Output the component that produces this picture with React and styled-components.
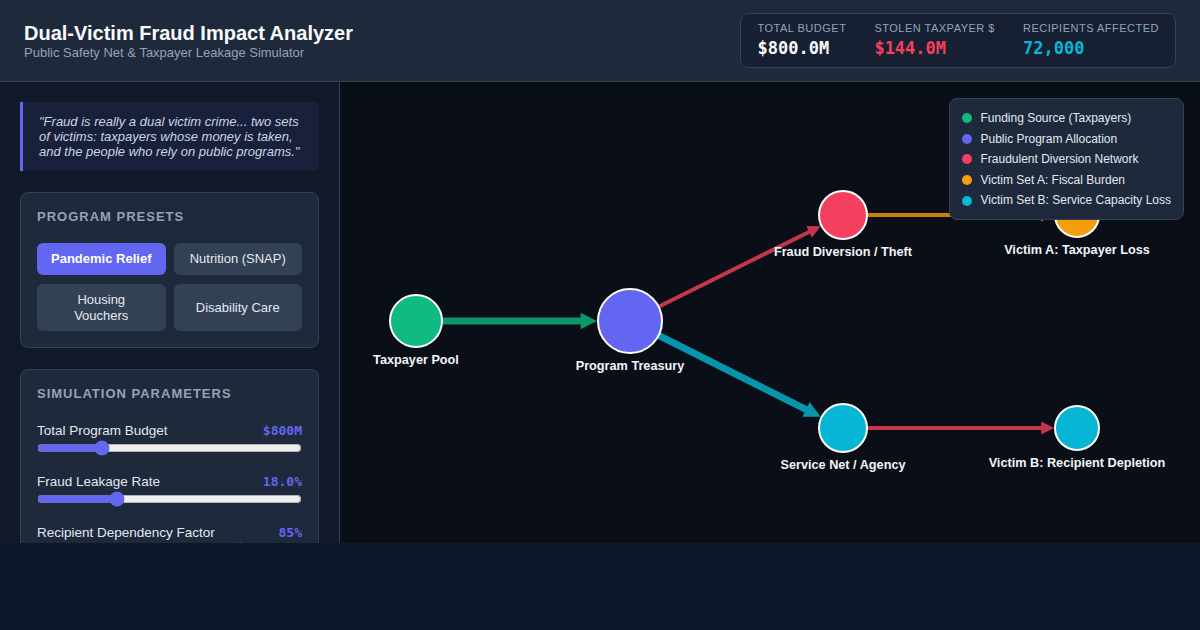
import React, { useState } from "react";
import styled, { createGlobalStyle } from "styled-components";

const Global = createGlobalStyle`
  body {
    margin: 0;
    background: #0f172a;
    font-family: "Liberation Sans", Arial, sans-serif;
    color: #f1f5f9;
  }
`;

const PRESETS = [
  { name: "Pandemic Relief", budget: 800, fraud: 18, dep: 85 },
  { name: "Nutrition (SNAP)", budget: 1200, fraud: 8, dep: 90 },
  { name: "Housing Vouchers", budget: 600, fraud: 6, dep: 80 },
  { name: "Disability Care", budget: 900, fraud: 10, dep: 95 },
];

const NODES = {
  tax: { x: 76, y: 239, r: 26, color: "#10b981", label: "Taxpayer Pool" },
  pool: { x: 290, y: 239, r: 32, color: "#6366f1", label: "Program Treasury" },
  fraud: { x: 503, y: 133, r: 24, color: "#f43f5e", label: "Fraud Diversion / Theft" },
  vicA: { x: 737, y: 133, r: 22, color: "#f59e0b", label: "Victim A: Taxpayer Loss" },
  agency: { x: 503, y: 346, r: 24, color: "#06b6d4", label: "Service Net / Agency" },
  vicB: { x: 737, y: 346, r: 22, color: "#06b6d4", label: "Victim B: Recipient Depletion" },
};

const EDGES = [
  { from: "tax", to: "pool", color: "#10b981", w: 7 },
  { from: "pool", to: "fraud", color: "#f43f5e", w: 4 },
  { from: "pool", to: "agency", color: "#06b6d4", w: 7 },
  { from: "fraud", to: "vicA", color: "#f59e0b", w: 4 },
  { from: "agency", to: "vicB", color: "#f43f5e", w: 4 },
];

const LEGEND = [
  ["#10b981", "Funding Source (Taxpayers)"],
  ["#6366f1", "Public Program Allocation"],
  ["#f43f5e", "Fraudulent Diversion Network"],
  ["#f59e0b", "Victim Set A: Fiscal Burden"],
  ["#06b6d4", "Victim Set B: Service Capacity Loss"],
];

function Edge({ e }) {
  const a = NODES[e.from];
  const b = NODES[e.to];
  const dx = b.x - a.x;
  const dy = b.y - a.y;
  const len = Math.sqrt(dx * dx + dy * dy);
  const ux = dx / len;
  const uy = dy / len;
  const head = 8 + e.w * 1.2;
  const half = 4 + e.w * 0.6;
  const tipX = b.x - ux * (b.r + 1);
  const tipY = b.y - uy * (b.r + 1);
  const baseX = tipX - ux * head;
  const baseY = tipY - uy * head;
  const sx = a.x + ux * a.r;
  const sy = a.y + uy * a.r;
  const pts = [
    `${tipX},${tipY}`,
    `${baseX - uy * half},${baseY + ux * half}`,
    `${baseX + uy * half},${baseY - ux * half}`,
  ].join(" ");
  return (
    <g opacity="0.8">
      <line x1={sx} y1={sy} x2={baseX + ux * 2} y2={baseY + uy * 2} stroke={e.color} strokeWidth={e.w} />
      <polygon points={pts} fill={e.color} />
    </g>
  );
}

export default function App() {
  const [preset, setPreset] = useState(0);
  const [budget, setBudget] = useState(800);
  const [fraud, setFraud] = useState(18);
  const [dep, setDep] = useState(85);

  const stolen = (budget * fraud) / 100;
  const recipients = Math.round((stolen * 1e6) / 2000);

  const pick = (i) => {
    setPreset(i);
    setBudget(PRESETS[i].budget);
    setFraud(PRESETS[i].fraud);
    setDep(PRESETS[i].dep);
  };

  return (
    <>
      <Global />
      <Header>
        <div>
          <Title>Dual-Victim Fraud Impact Analyzer</Title>
          <Subtitle>Public Safety Net &amp; Taxpayer Leakage Simulator</Subtitle>
        </div>
        <Stats>
          <Stat>
            <StatLabel>Total Budget</StatLabel>
            <StatValue>${budget.toFixed(1)}M</StatValue>
          </Stat>
          <Stat>
            <StatLabel>Stolen Taxpayer $</StatLabel>
            <StatValue $color="#f43f5e">${stolen.toFixed(1)}M</StatValue>
          </Stat>
          <Stat>
            <StatLabel>Recipients Affected</StatLabel>
            <StatValue $color="#06b6d4">{recipients.toLocaleString("en-US")}</StatValue>
          </Stat>
        </Stats>
      </Header>
      <Main>
        <Sidebar>
          <Quote>
            "Fraud is really a dual victim crime... two sets of victims: taxpayers whose money is taken,
            and the people who rely on public programs."
          </Quote>
          <Card>
            <CardTitle>Program Presets</CardTitle>
            <PresetGrid>
              {PRESETS.map((p, i) => (
                <PresetButton key={p.name} $active={i === preset} onClick={() => pick(i)}>
                  {p.name}
                </PresetButton>
              ))}
            </PresetGrid>
          </Card>
          <Card>
            <CardTitle>Simulation Parameters</CardTitle>
            <Controls>
              <Control>
                <ControlRow>
                  <span>Total Program Budget</span>
                  <ControlValue>${budget}M</ControlValue>
                </ControlRow>
                <Range type="range" min="100" max="3150" value={budget} onChange={(e) => setBudget(+e.target.value)} />
              </Control>
              <Control>
                <ControlRow>
                  <span>Fraud Leakage Rate</span>
                  <ControlValue>{fraud.toFixed(1)}%</ControlValue>
                </ControlRow>
                <Range type="range" min="1" max="60" value={fraud} onChange={(e) => setFraud(+e.target.value)} />
              </Control>
              <Control>
                <ControlRow>
                  <span>Recipient Dependency Factor</span>
                  <ControlValue>{dep}%</ControlValue>
                </ControlRow>
                <Range type="range" min="30" max="100" value={dep} onChange={(e) => setDep(+e.target.value)} />
              </Control>
            </Controls>
          </Card>
        </Sidebar>
        <Canvas>
          <svg width="100%" height="100%" viewBox="0 0 860 461">
            {EDGES.map((e) => (
              <Edge key={e.from + e.to} e={e} />
            ))}
            {Object.entries(NODES).map(([k, n]) => (
              <g key={k}>
                <circle cx={n.x} cy={n.y} r={n.r} fill={n.color} stroke="#fff" strokeWidth="2" />
                <NodeLabel x={n.x} y={n.y + n.r + 17} textAnchor="middle">
                  {n.label}
                </NodeLabel>
              </g>
            ))}
          </svg>
          <Legend>
            {LEGEND.map(([c, t]) => (
              <LegendItem key={t}>
                <Dot $color={c} />
                {t}
              </LegendItem>
            ))}
          </Legend>
        </Canvas>
      </Main>
    </>
  );
}

const Header = styled.header`
  height: 81px;
  background: #1e293b;
  border-bottom: 1px solid #334155;
  display: flex;
  align-items: center;
  justify-content: space-between;
  padding: 0 24px;
`;

const Title = styled.h1`
  margin: 0;
  font-size: 20px;
  font-weight: 700;
  color: #f8fafc;
  line-height: 24px;
`;

const Subtitle = styled.div`
  font-size: 13px;
  color: #94a3b8;
  line-height: 16px;
`;

const Stats = styled.div`
  display: flex;
  gap: 28px;
  background: #162032;
  border: 1px solid #334155;
  border-radius: 8px;
  padding: 8px 16px;
`;

const Stat = styled.div`
  display: flex;
  flex-direction: column;
  gap: 2px;
`;

const StatLabel = styled.div`
  font-size: 11px;
  text-transform: uppercase;
  letter-spacing: 0.5px;
  color: #94a3b8;
  line-height: 13px;
`;

const StatValue = styled.div`
  font-family: "DejaVu Sans Mono", monospace;
  font-weight: 700;
  font-size: 17px;
  line-height: 22px;
  color: ${(p) => p.$color || "#f8fafc"};
`;

const Main = styled.main`
  display: flex;
  height: 461px;
`;

const Sidebar = styled.aside`
  width: 340px;
  flex-shrink: 0;
  box-sizing: border-box;
  background: #111827;
  border-right: 1px solid #334155;
  padding: 20px;
  display: flex;
  flex-direction: column;
  gap: 21px;
  overflow: hidden;
`;

const Quote = styled.blockquote`
  margin: 0;
  padding: 12px 16px;
  background: #19203b;
  border-left: 3px solid #6366f1;
  border-radius: 0 6px 6px 0;
  font-style: italic;
  font-size: 13px;
  line-height: 15px;
  color: #cbd5e1;
`;

const Card = styled.section`
  background: #1e293b;
  border: 1px solid #334155;
  border-radius: 8px;
  padding: 16px;
  flex-shrink: 0;
`;

const CardTitle = styled.h3`
  margin: 0 0 18px;
  font-size: 13px;
  font-weight: 700;
  letter-spacing: 1px;
  text-transform: uppercase;
  color: #94a3b8;
  line-height: 16px;
`;

const PresetGrid = styled.div`
  display: grid;
  grid-template-columns: 1fr 1fr;
  gap: 9px 8px;
`;

const PresetButton = styled.button`
  border: none;
  border-radius: 6px;
  padding: 8px 12px;
  font-family: inherit;
  font-size: 13px;
  line-height: 15.5px;
  min-height: 32px;
  cursor: pointer;
  background: ${(p) => (p.$active ? "#6366f1" : "#334155")};
  color: ${(p) => (p.$active ? "#fff" : "#e2e8f0")};
  font-weight: ${(p) => (p.$active ? 700 : 400)};
`;

const Controls = styled.div`
  padding-top: 3px;
`;

const Control = styled.div`
  margin-bottom: 14px;
`;

const ControlRow = styled.div`
  display: flex;
  justify-content: space-between;
  align-items: baseline;
  font-size: 13.5px;
  color: #e2e8f0;
  margin-bottom: 2px;
`;

const ControlValue = styled.span`
  font-family: "DejaVu Sans Mono", monospace;
  font-weight: 700;
  font-size: 13px;
  color: #6366f1;
`;

const Range = styled.input`
  width: 100%;
  margin: 0;
  accent-color: #6366f1;
`;

const Canvas = styled.div`
  position: relative;
  flex: 1;
  background: #0a0e17;
  overflow: hidden;
`;

const NodeLabel = styled.text`
  font-family: "Liberation Sans", Arial, sans-serif;
  font-size: 12.7px;
  font-weight: 700;
  fill: #f1f5f9;
`;

const Legend = styled.div`
  position: absolute;
  top: 16px;
  right: 16px;
  background: #1e293b;
  border: 1px solid #334155;
  border-radius: 8px;
  padding: 11px 12px 10px;
  display: flex;
  flex-direction: column;
  gap: 4px;
`;

const LegendItem = styled.div`
  display: flex;
  align-items: center;
  gap: 8px;
  font-size: 12px;
  line-height: 16.6px;
  color: #e2e8f0;
`;

const Dot = styled.span`
  width: 10px;
  height: 10px;
  border-radius: 50%;
  background: ${(p) => p.$color};
`;
